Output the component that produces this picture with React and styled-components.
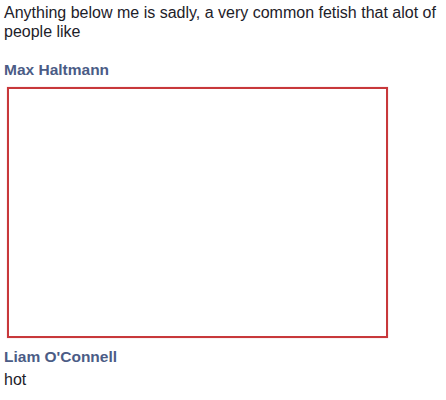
import styled, { createGlobalStyle } from "styled-components";

const GlobalStyle = createGlobalStyle`
  body {
    margin: 0;
    background: #fff;
    font-family: "Liberation Sans", Arial, sans-serif;
  }
`;

const Page = styled.div`
  padding: 3px 4px 0 4px;
  color: #1d2129;
  font-size: 16px;
`;

const Post = styled.p`
  margin: 0;
  line-height: 19px;
  width: 438px;
`;

const Comment = styled.div`
  margin-top: ${(p) => p.top}px;
`;

const Author = styled.div`
  font-weight: bold;
  font-size: 15.5px;
  color: #4b5c86;
  line-height: 18px;
`;

const Body = styled.div`
  line-height: 18px;
  margin-top: 5px;
`;

const Frame = styled.div`
  margin: 8px 0 0 3px;
  width: 377px;
  height: 247px;
  border: 2px solid #c8383b;
  box-shadow: 0 0 1px rgba(200, 56, 59, 0.4);
  background: #fff;
`;

const App = () => {
  return (
    <>
      <GlobalStyle />
      <Page>
        <Post>
          Anything below me is sadly, a very common fetish that alot of people like
        </Post>
        <Comment top={20}>
          <Author>Max Haltmann</Author>
          <Frame />
        </Comment>
        <Comment top={10}>
          <Author>Liam O'Connell</Author>
          <Body>hot</Body>
        </Comment>
      </Page>
    </>
  );
};

export default App;
